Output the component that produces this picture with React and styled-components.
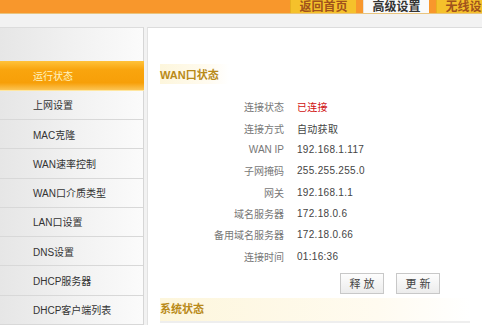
import React from "react";
import styled, { createGlobalStyle } from "styled-components";

const Global = createGlobalStyle`
  html, body {
    margin: 0;
    padding: 0;
    width: 482px;
    height: 325px;
    overflow: hidden;
    background: #fff;
    font-family: "Liberation Sans", "Noto Sans CJK SC", sans-serif;
  }
`;

const menu = [
  "运行状态",
  "上网设置",
  "MAC克隆",
  "WAN速率控制",
  "WAN口介质类型",
  "LAN口设置",
  "DNS设置",
  "DHCP服务器",
  "DHCP客户端列表",
];

const rows = [
  ["连接状态", "已连接", true],
  ["连接方式", "自动获取"],
  ["WAN IP", "192.168.1.117"],
  ["子网掩码", "255.255.255.0"],
  ["网关", "192.168.1.1"],
  ["域名服务器", "172.18.0.6"],
  ["备用域名服务器", "172.18.0.66"],
  ["连接时间", "01:16:36"],
];

const App = () => {
  return (
    <Page>
      <Global />
      <TopBar>
        <Tab>返回首页</Tab>
        <Tab active>高级设置</Tab>
        <Tab>无线设置</Tab>
      </TopBar>
      <Band />
      <Body>
        <Side>
          {menu.map((m, i) => (
            <MenuItem key={m} active={i === 0}>
              {m}
            </MenuItem>
          ))}
        </Side>
        <Main>
          <Title>WAN口状态</Title>
          <Table>
            {rows.map(([k, v, red]) => (
              <Row key={k}>
                <Label>{k}</Label>
                <Value red={red}>{v}</Value>
              </Row>
            ))}
          </Table>
          <Buttons>
            <Btn>释 放</Btn>
            <Btn>更 新</Btn>
          </Buttons>
          <Title second>系统状态</Title>
        </Main>
      </Body>
    </Page>
  );
};

const Page = styled.div`
  width: 482px;
  height: 325px;
  display: flex;
  flex-direction: column;
  overflow: hidden;
`;

const TopBar = styled.div`
  height: 13px;
  background: #f8972c;
  display: flex;
  justify-content: flex-end;
  align-items: flex-end;
  gap: 7px;
  margin-right: -20px;
  border-bottom: 1px solid #e9c47e;
`;

const Tab = styled.div`
  width: 66px;
  height: 13px;
  background: ${(p) => (p.active ? "#fafafa" : "#f5c12b")};
  border-left: 1px solid ${(p) => (p.active ? "#e8e2d8" : "#e8b020")};
  color: ${(p) => (p.active ? "#333" : "#a0521c")};
  font-size: 12px;
  line-height: 12px;
  text-align: center;
  box-sizing: border-box;
  padding-top: 0;
  overflow: hidden;
  font-weight: bold;
  display: flex;
  align-items: flex-end;
  justify-content: center;
`;

const Band = styled.div`
  height: 15px;
  background: #f2f2f2;
`;

const Body = styled.div`
  flex: 1;
  display: flex;
  gap: 3px;
  background: #f2f2f2;
`;

const Side = styled.div`
  width: 144px;
  padding-top: 33px;
  background: linear-gradient(to right, #e6e6e6 0%, #f1f1f1 50%, #fbfbfb 100%);
  border-top: 1px solid #dcdcdc;
  border-right: 1px solid #d6d6d6;
  box-sizing: border-box;
  display: flex;
  flex-direction: column;
`;

const MenuItem = styled.div`
  height: 29.3px;
  flex-shrink: 0;
  box-sizing: border-box;
  padding-left: 33px;
  display: flex;
  align-items: center;
  font-size: 10px;
  color: ${(p) => (p.active ? "#fff3c0" : "#333")};
  border-bottom: 1px solid ${(p) => (p.active ? "#ffe6a0" : "#d8d8d8")};
  background: ${(p) =>
    p.active
      ? "linear-gradient(to bottom, #ffc23a 0%, #f9a50e 30%, #f79f08 75%, #fcc453 100%)"
      : "transparent"};
  margin-right: ${(p) => (p.active ? "-1px" : "0")};
`;

const Main = styled.div`
  flex: 1;
  background: #fff;
  border-top: 1px solid #dcdcdc;
  border-left: 1px solid #e2e2e2;
  padding: 36px 0 0 12px;
  display: flex;
  flex-direction: column;
`;

const Title = styled.div`
  align-self: flex-start;
  font-size: 11px;
  font-weight: 600;
  color: #b98a18;
  padding: 2px 10px 2px 0;
  background: linear-gradient(to right, #fdf6dc 0%, #fffbf0 70%, #fff 100%);
  margin-top: ${(p) => (p.second ? "4px" : "0")};
  margin-bottom: ${(p) => (p.second ? "0" : "12px")};
  ${(p) =>
    p.second &&
    `
    width: 300px;
    border-bottom: 2px solid #eeeeee;
    padding-bottom: 5px;
  `}
`;

const Table = styled.div`
  display: flex;
  flex-direction: column;
`;

const Row = styled.div`
  display: grid;
  grid-template-columns: 124px 1fr;
  gap: 13px;
  height: 21.3px;
  align-items: center;
  font-size: 10px;
`;

const Label = styled.div`
  text-align: right;
  color: #777;
`;

const Value = styled.div`
  color: ${(p) => (p.red ? "#d01010" : "#444")};
  letter-spacing: 0.3px;
`;

const Buttons = styled.div`
  display: flex;
  gap: 12px;
  padding-left: 180px;
  margin-top: 6px;
`;

const Btn = styled.div`
  width: 44px;
  height: 21px;
  box-sizing: border-box;
  border: 1px solid #c8c8c8;
  background: linear-gradient(to bottom, #fdfdfd, #ececec);
  font-size: 11px;
  color: #444;
  display: flex;
  align-items: center;
  justify-content: center;
`;

export default App;
